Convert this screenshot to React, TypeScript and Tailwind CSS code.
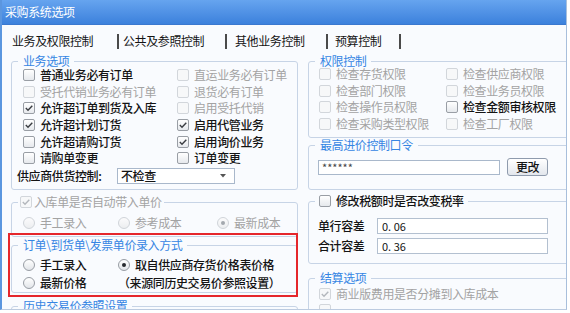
import React from "react";

type BoxProps = { checked?: boolean; disabled?: boolean };

function Box({ checked, disabled }: BoxProps) {
  return (
    <span
      className={`w-[12px] h-[12px] shrink-0 rounded-[2px] border flex items-center justify-center ${
        disabled
          ? "border-[#d2d6db] bg-[#f7f8f9]"
          : "border-[#999ea5] bg-gradient-to-b from-[#ffffff] to-[#e6e9ed]"
      }`}
    >
      {checked && (
        <svg width="10" height="10" viewBox="0 0 10 10">
          <path
            d="M1.8 5.1 L4 7.2 L8.3 2.7"
            fill="none"
            stroke={disabled ? "#b3b7bc" : "#3a3d42"}
            strokeWidth="1.4"
          />
        </svg>
      )}
    </span>
  );
}

function Radio({ on, disabled }: { on?: boolean; disabled?: boolean }) {
  return (
    <span
      className={`w-[12px] h-[12px] shrink-0 rounded-full border flex items-center justify-center ${
        disabled
          ? "border-[#d0d4d9] bg-gradient-to-b from-[#fbfbfc] to-[#eceef0]"
          : "border-[#989da4] bg-gradient-to-b from-[#ffffff] to-[#e2e5e9]"
      }`}
    >
      {on && (
        <span
          className={`w-[4px] h-[4px] rounded-full ${
            disabled ? "bg-[#a3a8ae]" : "bg-[#26292e]"
          }`}
        />
      )}
    </span>
  );
}

function Txt({ disabled, children }: { disabled?: boolean; children: React.ReactNode }) {
  return (
    <span className={disabled ? "text-[#a3a3a3]" : "text-[#141414] font-medium"}>
      {children}
    </span>
  );
}

function Check({
  label,
  checked,
  disabled,
}: {
  label?: string;
  checked?: boolean;
  disabled?: boolean;
}) {
  return (
    <div className="flex items-center gap-[5px] whitespace-nowrap">
      <Box checked={checked} disabled={disabled} />
      {label && <Txt disabled={disabled}>{label}</Txt>}
    </div>
  );
}

function RadioItem({
  label,
  on,
  disabled,
}: {
  label: string;
  on?: boolean;
  disabled?: boolean;
}) {
  return (
    <div className="flex items-center gap-[5px] whitespace-nowrap">
      <Radio on={on} disabled={disabled} />
      <Txt disabled={disabled}>{label}</Txt>
    </div>
  );
}

function Legend({ children }: { children: React.ReactNode }) {
  return (
    <div className="-mt-[7px] ml-[6px] px-[5px] w-fit h-[12px] leading-[12px] bg-[#f9fbfe] text-[#3585e3] whitespace-nowrap">
      {children}
    </div>
  );
}

function Group({
  className,
  children,
}: {
  className: string;
  children: React.ReactNode;
}) {
  return (
    <div className={`border border-[#c7d4e6] rounded-[3px] ${className}`}>
      {children}
    </div>
  );
}

function Sep() {
  return <span className="w-[2px] h-[15px] bg-[#4a4a4a] shrink-0" />;
}

export default function App() {
  return (
    <div className="w-[570px] h-[313px] bg-white overflow-hidden font-['Noto_Sans_CJK_SC',sans-serif] text-[12px] tracking-[-0.4px] leading-[16px]">
      <div className="w-[567px] h-[310px] flex flex-col overflow-hidden border-l-2 border-r border-b border-l-[#5b96df] border-r-[#a8bfdc] border-b-[#bccbe0]">
        <div className="h-[25px] shrink-0 bg-gradient-to-b from-[#66a4ef] to-[#3c81dc] text-white flex items-center pl-[3px] border-b border-[#3a78cf]">
          采购系统选项
        </div>
        <div className="flex-1 bg-[#f9fbfe] pl-[9px] overflow-hidden">
          {/* tabs */}
          <div className="mt-[8px] h-[16px] pl-[1px] flex items-center text-[#141414] whitespace-nowrap">
            <span className="w-[105px] shrink-0">业务及权限控制</span>
            <Sep />
            <span className="ml-[4px] w-[102px] shrink-0">公共及参照控制</span>
            <Sep />
            <span className="ml-[8px] w-[91px] shrink-0">其他业务控制</span>
            <Sep />
            <span className="ml-[7px] w-[64px] shrink-0">预算控制</span>
            <Sep />
          </div>

          <div className="mt-[12px] flex">
            {/* left column */}
            <div className="w-[287px] shrink-0 flex flex-col">
              <Group className="h-[129px]">
                <Legend>业务选项</Legend>
                <div className="pl-[11px]">
                  <div className="grid grid-cols-[154px_1fr] auto-rows-[16.6px] items-center">
                    <Check label="普通业务必有订单" />
                    <Check label="直运业务必有订单" disabled />
                    <Check label="受托代销业务必有订单" disabled />
                    <Check label="退货必有订单" disabled />
                    <Check label="允许超订单到货及入库" checked />
                    <Check label="启用受托代销" disabled />
                    <Check label="允许超计划订货" checked />
                    <Check label="启用代管业务" checked />
                    <Check label="允许超请购订货" />
                    <Check label="启用询价业务" checked />
                    <Check label="请购单变更" />
                    <Check label="订单变更" />
                  </div>
                </div>
                <div className="h-[19px] pl-[5px] flex items-center whitespace-nowrap">
                  <span className="w-[100px] shrink-0 text-[#141414] font-medium">供应商供货控制:</span>
                  <div className="w-[118px] h-[16px] border border-[#a9b8cb] bg-white flex items-center justify-between pl-[3px] pr-[8px]">
                    <span className="text-[#141414] font-medium leading-[14px]">不检查</span>
                    <svg width="6" height="4" viewBox="0 0 6 4">
                      <path d="M0 0 L6 0 L3 3.5 Z" fill="#555" />
                    </svg>
                  </div>
                </div>
              </Group>

              <Group className="mt-[12px] h-[35px]">
                <div className="-mt-[7px] ml-[6px] px-[2px] w-fit h-[12px] bg-[#f9fbfe] flex items-center gap-[2px] whitespace-nowrap">
                  <Box checked disabled />
                  <span className="text-[#a3a3a3] leading-[12px]">入库单是否自动带入单价</span>
                </div>
                <div className="mt-[7px] h-[16px] pl-[11px] flex items-center">
                  <div className="w-[95px] shrink-0">
                    <RadioItem label="手工录入" disabled />
                  </div>
                  <div className="w-[99px] shrink-0">
                    <RadioItem label="参考成本" disabled />
                  </div>
                  <RadioItem label="最新成本" on disabled />
                </div>
              </Group>

              <div className="relative mt-[8px]">
                <Group className="h-[48px]">
                  <Legend>{"订单\\到货单\\发票单价录入方式"}</Legend>
                  <div className="mt-[6px] h-[16px] pl-[11px] flex items-center">
                    <div className="w-[95px] shrink-0">
                      <RadioItem label="手工录入" />
                    </div>
                    <RadioItem label="取自供应商存货价格表价格" on />
                  </div>
                  <div className="mt-[2px] h-[16px] pl-[11px] flex items-center">
                    <div className="w-[95px] shrink-0">
                      <RadioItem label="最新价格" />
                    </div>
                    <span className="text-[#141414] font-medium whitespace-nowrap">（来源同历史交易价参照设置）</span>
                  </div>
                </Group>
                <div className="absolute -left-[3px] -top-[12px] right-0 -bottom-[4px] border-2 border-[#e5262b] pointer-events-none" />
              </div>

              <Group className="mt-[13px] h-[40px]">
                <Legend>历史交易价参照设置</Legend>
              </Group>
            </div>

            {/* right column */}
            <div className="ml-[10px] w-[270px] shrink-0 flex flex-col">
              <Group className="h-[77px]">
                <Legend>权限控制</Legend>
                <div className="-mt-[1px] pl-[10px] grid grid-cols-[127px_1fr] auto-rows-[16.6px] items-center">
                  <Check label="检查存货权限" disabled />
                  <Check label="检查供应商权限" disabled />
                  <Check label="检查部门权限" disabled />
                  <Check label="检查业务员权限" disabled />
                  <Check label="检查操作员权限" disabled />
                  <Check label="检查金额审核权限" />
                  <Check label="检查采购类型权限" disabled />
                  <Check label="检查工厂权限" disabled />
                </div>
              </Group>

              <Group className="mt-[7px] h-[45px]">
                <Legend>最高进价控制口令</Legend>
                <div className="mt-[7px] h-[18px] pl-[9px] flex items-center">
                  <div className="w-[182px] h-[15px] border border-[#a9b8cb] bg-white flex items-center pl-[3px] text-[#444] text-[11px] tracking-[0px] leading-[13px]">
                    ******
                  </div>
                  <div className="ml-[7px] w-[41px] h-[18px] rounded-[3px] border border-[#8f9bad] bg-gradient-to-b from-[#ffffff] to-[#e3e7ed] flex items-center justify-center text-[#141414] font-medium">
                    更改
                  </div>
                </div>
              </Group>

              <Group className="mt-[11px] h-[63px]">
                <div className="-mt-[7px] ml-[6px] px-[4px] w-fit h-[12px] bg-[#f9fbfe] flex items-center gap-[5px] whitespace-nowrap">
                  <Box />
                  <span className="text-[#141414] font-medium leading-[12px]">修改税额时是否改变税率</span>
                </div>
                <div className="mt-[11px] h-[16px] pl-[9px] flex items-center">
                  <span className="w-[59px] shrink-0 text-[#141414] font-medium">单行容差</span>
                  <div className="w-[171px] h-[16px] border border-[#b3c0d0] bg-white flex items-center pl-[4px] text-[#141414] text-[11px] tracking-[0px]">
                    0. 06
                  </div>
                </div>
                <div className="mt-[4px] h-[16px] pl-[9px] flex items-center">
                  <span className="w-[59px] shrink-0 text-[#141414] font-medium">合计容差</span>
                  <div className="w-[171px] h-[16px] border border-[#b3c0d0] bg-white flex items-center pl-[4px] text-[#141414] text-[11px] tracking-[0px]">
                    0. 36
                  </div>
                </div>
              </Group>

              <Group className="mt-[14px] h-[40px]">
                <Legend>结算选项</Legend>
                <div className="mt-[2px] pl-[10px] flex flex-col">
                  <div className="h-[16px] flex items-center">
                    <Check label="商业版费用是否分摊到入库成本" checked disabled />
                  </div>
                  <div className="h-[16px] flex items-center">
                    <Check disabled />
                  </div>
                </div>
              </Group>
            </div>
          </div>
        </div>
      </div>
    </div>
  );
}
